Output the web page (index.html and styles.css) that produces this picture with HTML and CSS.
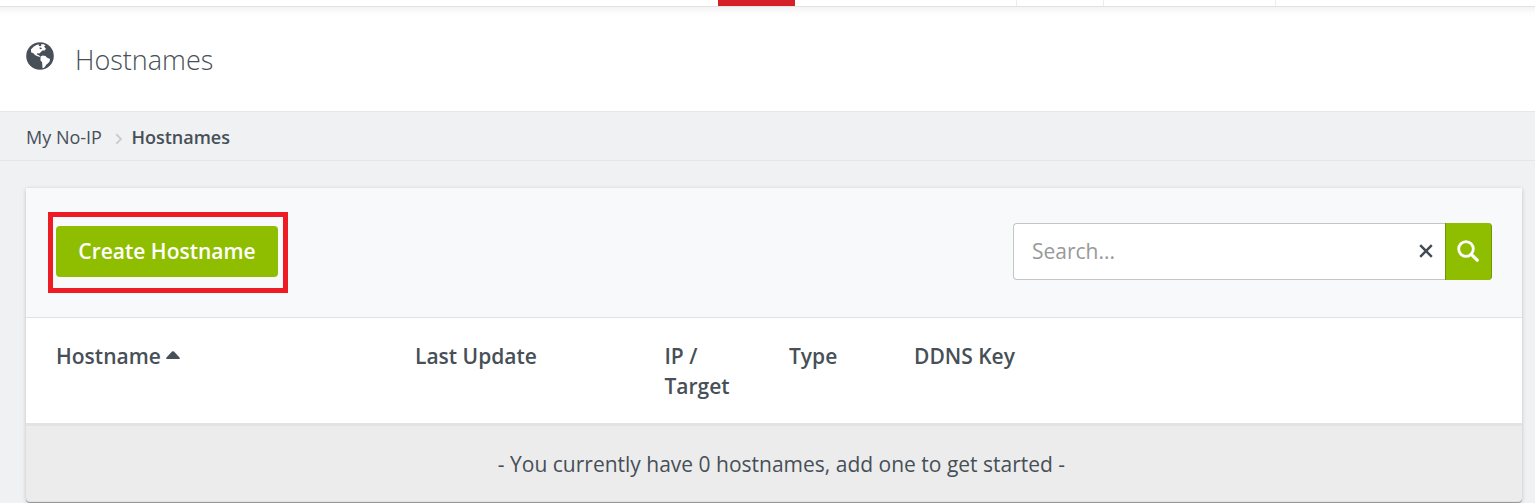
FILE: index.html
```html
<!DOCTYPE html>
<html lang="en">
<head>
<meta charset="utf-8">
<title>Hostnames</title>
<link rel="stylesheet" href="styles.css">
</head>
<body>
<nav class="topnav">
  <span class="tab tab-first"></span><span class="tab tab-active"></span><span class="tab tab-wide"></span><span class="tab tab-small"></span><span class="tab tab-mid"></span>
</nav>
<header class="page-head">
  <svg class="globe" viewBox="0 0 28 28">
    <circle cx="14" cy="14" r="13.8" fill="#474f59"/>
    <path fill="#fff" d="M4.9 7.6 7.8 4.5 11 2.7 13.4 2.6 12.6 3.7 14.2 4.3 15.4 3.4 15 2.2 17.8 2.3 19.5 3.4 18 4.6 20 6.8 18.6 8.6 16.4 8.6 14.4 10.4 13.2 11.6 11.4 11.2 10.6 12.3 12.2 12.9 13.6 13.7 14.5 15.1 12.2 14.6 9.3 13.2 7 11 5.2 10.4Z"/>
    <path fill="#474f59" d="M13.2 5.8 15 5.6 16 6.8 14.2 7.2Z"/>
    <path fill="#fff" d="M14.6 14.6 16.8 13.6 19.5 14 20.8 15.5 24 17 23.6 19.4 21.8 21.4 20.2 22.8 18.4 25.6 16.5 26.2 16.3 22.8 16.1 20.2 14.4 18.2Z"/>
  </svg>
  <h1 class="title">Hostnames</h1>
</header>
<div class="crumbs">
  <span>My No-IP</span>
  <svg class="chev" viewBox="0 0 8 12"><path d="M1.2 1.2 6 6 1.2 10.8" fill="none" stroke="#c9cbcd" stroke-width="1.8"/></svg>
  <b class="here">Hostnames</b>
</div>
<main class="card">
  <div class="tools">
    <div class="marker"><button class="create">Create Hostname</button></div>
    <div class="search">
      <div class="field">
        <span class="hint">Search...</span>
        <svg class="clear" viewBox="0 0 14 14"><path d="M1.2 1.2 12.8 12.8M12.8 1.2 1.2 12.8" stroke="#434c54" stroke-width="2.5"/></svg>
      </div>
      <div class="go">
        <svg class="lens" viewBox="0 0 22 22"><circle cx="9" cy="9" r="7.3" fill="none" stroke="#fff" stroke-width="2.8"/><path d="M14.3 14.3 20.2 20.2" stroke="#fff" stroke-width="3.2" stroke-linecap="round"/></svg>
      </div>
    </div>
  </div>
  <div class="heads">
    <span>Hostname<svg class="sort" viewBox="0 0 14 8"><path d="M.6 8Q-.3 7.5.5 6.5L6 .6Q7 -.2 8 .6L13.5 6.5Q14.3 7.5 13.4 8Z" fill="#474f59"/></svg></span>
    <span>Last Update</span>
    <span>IP /<br>Target</span>
    <span>Type</span>
    <span>DDNS Key</span>
  </div>
  <div class="empty">- You currently have 0 hostnames, add one to get started -</div>
</main>
</body>
</html>
```
FILE: styles.css
```css
* { box-sizing: border-box; }
body { margin: 0; height: 503px; overflow: hidden; background: #f0f1f3; color: #474f57; font-family: "Open Sans", sans-serif; }
.topnav { display: flex; height: 6px; background: #fff; }
.tab { border-right: 1px solid #ececec; }
.tab-first { width: 718px; border: 0; }
.tab-active { width: 77px; background: #d42027; border: 0; }
.tab-wide { width: 222px; }
.tab-small { width: 87px; }
.tab-mid { width: 172px; }
.page-head { display: flex; height: 106px; padding-left: 26px; background: linear-gradient(#e2e2e2 0, #e2e2e2 1px, #f3f3f3 1px, #fdfdfd 7px, #fff 12px); border-bottom: 1px solid #e6e7e8; }
.globe { width: 28px; height: 28px; margin-top: 36px; }
.title { margin: 35px 0 0 21px; font-size: 27px; line-height: 38px; font-weight: 300; }
.crumbs { display: flex; align-items: center; height: 49px; padding: 2px 0 0 26px; border-bottom: 1px solid #e5e6e8; font-size: 18px; line-height: 46px; }
.chev { width: 8px; height: 12px; margin: 3px 8px 0 13.5px; }
.here { font-weight: 600; }
.card { width: 1496px; margin: 27px 0 0 26px; background: #fff; border-radius: 0 0 4px 4px; box-shadow: 0 1px 4px rgba(0,0,0,.2); }
.tools { display: flex; justify-content: space-between; height: 130px; padding: 24px 30px 0 22px; background: #f8f9fb; border-bottom: 1px solid #e1e2e3; }
.marker { width: 240px; height: 81px; padding: 9px 3px; border: 5px solid #ed1c24; }
.create { display: block; width: 222px; height: 51px; padding: 0; border: 0; border-radius: 4px; background: #8fbe00; color: #fff; font: 600 21px/51px "Open Sans", sans-serif; }
.search { display: flex; width: 479px; height: 57px; margin-top: 11px; }
.field { display: flex; flex: 1; align-items: center; justify-content: space-between; padding: 0 12px 2px 18px; background: #fff; border: 1px solid #c5c5c5; border-right: 0; border-radius: 4px 0 0 4px; }
.hint { color: #999; font-size: 21px; }
.clear { width: 14px; height: 14px; }
.go { display: flex; align-items: center; justify-content: center; width: 47px; padding: 0 1px 1px 0; background: #8fbe00; border: solid #729800; border-width: 0 1px; border-radius: 0 4px 4px 0; }
.lens { width: 22px; height: 22px; }
.heads { display: grid; grid-template-columns: 359px 249.4px 124.6px 125px 1fr; height: 105px; padding: 23px 0 0 30px; font-size: 21px; line-height: 30px; font-weight: 600; }
.sort { width: 14px; height: 8px; margin-left: 5px; vertical-align: 5px; }
.empty { height: 79px; padding-left: 15px; border-top: 3px solid #e3e3e3; border-bottom: 1px solid #e2e2e2; border-radius: 0 0 4px 4px; background: #ececec; box-shadow: 0 1px 0 #999; text-align: center; font-size: 21px; line-height: 77px; }
```
